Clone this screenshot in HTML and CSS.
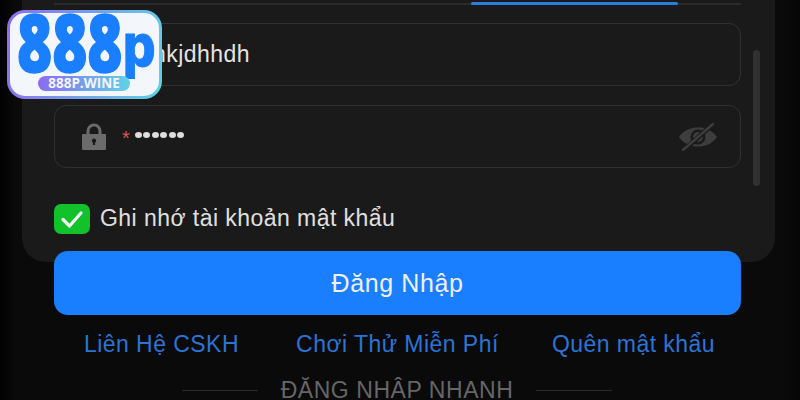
FILE: index.html
```html
<!DOCTYPE html>
<html lang="vi">
<head>
<meta charset="utf-8">
<title>888P Đăng Nhập</title>
<link rel="stylesheet" href="styles.css">
</head>
<body>
<main class="page">
  <div class="logo">
    <div class="logo-inner">
      <span class="logo-mark">888</span><span class="logo-p">p</span>
      <span class="logo-pill">888P.WINE</span>
    </div>
  </div>
  <section class="card">
    <div class="tabs"><span class="tab-active"></span></div>
    <div class="field field-user">
      <span class="value">nkjdhhdh</span>
    </div>
    <div class="field field-pass">
      <svg class="lock" viewBox="0 0 24 27" width="24" height="27"><path d="M4.500 11V8a7.500 7.500 0 0 1 15 0v3h-3V8a4.500 4.500 0 0 0-9 0v3z" fill="#6b6b6b"/><path fill-rule="evenodd" d="M1 11h22a1 1 0 0 1 1 1v14a1 1 0 0 1-1 1H1a1 1 0 0 1-1-1V12a1 1 0 0 1 1-1zm11 4.500a2.200 2.200 0 0 0-1.100 4.100V22h2.200v-2.400a2.200 2.200 0 0 0-1.100-4.100z" fill="#6b6b6b"/></svg>
      <span class="req">*</span>
      <span class="dots"><i></i><i></i><i></i><i></i><i></i><i></i></span>
      <svg class="eye" viewBox="0 0 40 30" width="40" height="30"><path fill-rule="evenodd" d="M1 15C6 8 12.500 5.500 20 5.500S34 8 39 15c-5 7-11.500 9.500-19 9.500S6 22 1 15zM20 7.500a7.500 7.500 0 1 0 0 15 7.500 7.500 0 0 0 0-15z" fill="#3d3d3d"/><circle cx="20" cy="15" r="5" fill="#3d3d3d"/><path d="M6 28 35 2" stroke="#1a1a1b" stroke-width="5"/><path d="M5 28 35 2" stroke="#3d3d3d" stroke-width="2.400" stroke-linecap="round"/></svg>
    </div>
    <label class="remember">
      <span class="check"><svg viewBox="0 0 24 20" width="24" height="20"><path d="M3 10.500 9.500 17 21 4" fill="none" stroke="#f4f4f4" stroke-width="3.200" stroke-linecap="round" stroke-linejoin="round"/></svg></span>
      <span class="remember-text">Ghi nhớ tài khoản mật khẩu</span>
    </label>
    <span class="scroll"></span>
  </section>
  <button class="login">Đăng Nhập</button>
  <nav class="links">
    <a>Liên Hệ CSKH</a>
    <a class="link-mid">Chơi Thử Miễn Phí</a>
    <a>Quên mật khẩu</a>
  </nav>
  <div class="quick"><span class="rule"></span><span class="quick-text">ĐĂNG NHẬP NHANH</span><span class="rule"></span></div>
</main>
</body>
</html>
```
FILE: styles.css
```css
* { box-sizing: border-box; }
html, body { margin: 0; height: 100%; }
body { background: #0a0a0b; overflow: hidden; font-family: "Liberation Sans", Arial, sans-serif; }
.page {
  position: relative;
  width: 800px;
  height: 400px;
  overflow: hidden;
  background: linear-gradient(90deg, #020202 0, #0a0a0b 16px, #0a0a0b 784px, #050505 100%);
  display: flex;
  flex-direction: column;
}
.card {
  position: relative;
  width: 753px;
  height: 262px;
  margin-left: 22px;
  padding: 3px 34px 0 32px;
  background: #1a1a1b;
  border-radius: 0 0 24px 24px;
  flex: none;
}
.tabs { height: 2px; background: #2b2b2b; position: relative; }
.tab-active { position: absolute; left: 417px; top: -1px; width: 207px; height: 3px; background: #2a7de0; border-radius: 2px; }
.field {
  height: 63px;
  border: 1.500px solid #303031;
  border-radius: 12px;
  display: flex;
  align-items: center;
}
.field-user { margin-top: 18px; padding-left: 98px; }
.field-pass { margin-top: 19px; padding-left: 27px; padding-right: 22px; }
.value { color: #e4e4e4; font-size: 23px; letter-spacing: .45px; }
.lock { flex: none; }
.req { color: #d9534f; font-size: 20px; margin-left: 16px; line-height: 1; height: 18px; }
.dots { display: flex; gap: 1.500px; margin-left: 5px; margin-top: -3px; }
.dots i { width: 7px; height: 6px; border-radius: 50%; background: #dedede; }
.eye { margin-left: auto; }
.remember { display: flex; align-items: center; gap: 10px; margin-top: 36px; }
.check {
  width: 36px; height: 30px;
  border-radius: 7px;
  background: #12c22b;
  display: flex; align-items: center; justify-content: center;
}
.remember-text { color: #e0e0e0; font-size: 23px; letter-spacing: .45px; margin-top: -2px; }
.scroll { position: absolute; left: 731px; top: 50px; width: 7px; height: 136px; border-radius: 4px; background: #313131; }
.login {
  flex: none;
  width: 687px;
  height: 64px;
  margin: -11px 0 0 54px;
  border: 0;
  border-radius: 14px;
  background: #1a7fff;
  color: #f0f0f0;
  font: 25px "Liberation Sans", Arial, sans-serif;
  letter-spacing: .6px;
  position: relative;
}
.links {
  display: flex;
  justify-content: space-between;
  margin: 15px 85px 0 84px;
  font-size: 23px;
  letter-spacing: .45px;
  color: #2b74d6;
}
.links a { line-height: 28px; }
.link-mid { margin: 0 -2px 0 2px; }
.quick {
  display: flex;
  align-items: center;
  justify-content: center;
  gap: 23px;
  margin: 20px 6px 0 0;
  color: #666;
  font-size: 23px;
  letter-spacing: .55px;
  line-height: 24px;
}
.rule { width: 76px; height: 1px; background: #2b2b2b; }
.logo {
  position: absolute;
  left: 7px; top: 10px;
  width: 155px; height: 89px;
  padding: 3px;
  border-radius: 18px;
  background: linear-gradient(100deg, #8d6cf0, #5fd2e6);
  z-index: 2;
}
.logo-inner {
  position: relative;
  width: 100%; height: 100%;
  border-radius: 15px;
  background: #f3f6fb;
}
.logo-mark {
  position: absolute;
  left: 7px; top: -17px;
  font: 800 80px/90px "Open Sans", sans-serif;
  color: #1a7fff;
  -webkit-text-stroke: 1.500px #1a7fff;
  transform: scaleX(.75);
  transform-origin: left top;
}
.logo-p {
  position: absolute;
  left: 113px; top: 1px;
  font: 800 58px/62px Inter, sans-serif;
  color: #1a7fff;
  -webkit-text-stroke: 1px #1a7fff;
  transform: scaleX(.88);
  transform-origin: left top;
}
.logo-pill {
  position: absolute;
  left: 28px; top: 63px;
  width: 92px; height: 15px;
  border-radius: 8px;
  background: linear-gradient(90deg, #8b6bf0, #5fd2e6);
  color: #f5f5ff;
  font: 700 13.500px/15px "Open Sans", sans-serif;
  text-align: center;
}
```
